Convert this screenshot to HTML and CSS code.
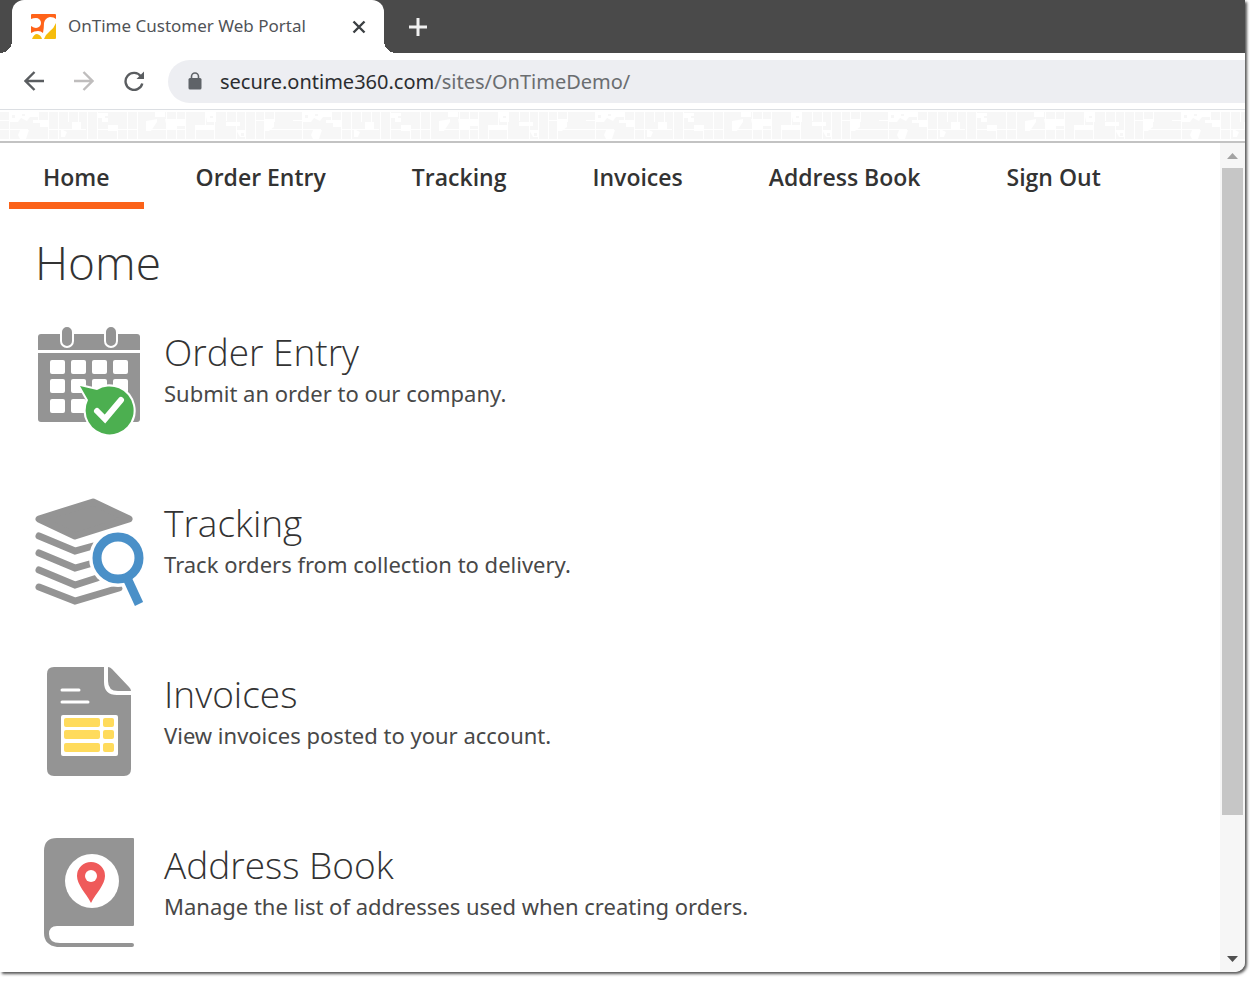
FILE: index.html
```html
<!DOCTYPE html>
<html lang="en">
<head>
    <meta charset="UTF-8">
    <meta name="viewport" content="width=device-width, initial-scale=1.0">
    <title>OnTime Customer Web Portal</title>
    <link rel="stylesheet" href="styles.css">
</head>
<body>
    <div class="window">
        <div class="tab-strip">
            <div class="tab">
                <svg class="favicon" viewBox="0 0 25 25" width="25" height="25">
                    <rect width="25" height="25" rx="1" fill="#ff6319"/>
                    <path d="M0 5Q2 4 5 4A5 5 0 0 1 5 14Q3 14 0 12Z" fill="#fff"/>
                    <path d="M25 5Q23 3 19 3Q14 4 13 9Q13 13 12 19Q10 17 7 17Q3 17 0 19V25H25Z" fill="#fff"/>
                    <path d="M25 9V24Q25 25 24 25H13Q15 20 19 17Q23 14 25 9Z" fill="#f6bc0c"/>
                    <path d="M1 25Q3 20 6 20Q10 21 11 25Z" fill="#f6bc0c"/>
                </svg>
                <span class="tab-title">OnTime Customer Web Portal</span>
                <button class="icon-button" aria-label="Close tab">
                    <svg viewBox="0 0 14 14" width="14" height="14"><path d="M1.500 1.500L12.500 12.500M12.500 1.500L1.500 12.500" fill="none" stroke="#3c4043" stroke-width="2.400"/></svg>
                </button>
            </div>
            <button class="icon-button new-tab" aria-label="New tab">
                <svg viewBox="0 0 18 18" width="18" height="18"><path d="M9 0V18M0 9H18" fill="none" stroke="#f0f0f0" stroke-width="3"/></svg>
            </button>
        </div>

        <div class="toolbar">
            <button class="icon-button" aria-label="Back">
                <svg viewBox="0 0 20 20" width="20" height="20"><path d="M20 10H1.500M10.500 1L1.500 10L10.500 19" fill="none" stroke="#5a5d60" stroke-width="2.400"/></svg>
            </button>
            <button class="icon-button" aria-label="Forward">
                <svg viewBox="0 0 20 20" width="20" height="20"><path d="M0 10H18.500M9.500 1L18.500 10L9.500 19" fill="none" stroke="#bfbdbd" stroke-width="2.400"/></svg>
            </button>
            <button class="icon-button" aria-label="Reload">
                <svg viewBox="0 0 20 20" width="20" height="20"><path d="M17 5.500A8.500 8.500 0 1 0 18.300 12.500" fill="none" stroke="#5a5d60" stroke-width="2.400"/><path d="M20 0.500V8H12.500Z" fill="#5a5d60"/></svg>
            </button>
            <div class="address-bar">
                <svg viewBox="0 0 14 18" width="14" height="18"><rect x="0.500" y="6" width="13" height="11.500" rx="1.500" fill="#5f6368"/><path d="M3.500 7V4.500A3.500 3.500 0 0 1 10.500 4.500V7" fill="none" stroke="#5f6368" stroke-width="1.600"/></svg>
                <span class="url">secure.ontime360.com<span class="path">/sites/OnTimeDemo/</span></span>
            </div>
        </div>

        <div class="banner">
            <svg width="100%" height="27" aria-hidden="true">
                <defs>
                    <pattern id="blocks" width="293" height="27" patternUnits="userSpaceOnUse">
                        <rect width="293" height="27" fill="#f7f7f7"/>
                        <path d="M9.500 0V27M38.500 0V9M48.500 0V27M58.500 0V27M68.500 0V10M78.500 0V10M87.500 0V27M97.500 0V27M117.500 17V27M127.500 0V27M137.500 0V27M166.500 0V27M176.500 0V27M185.500 0V27M195.500 17V27M205.500 0V17M214.500 0V27M226.500 0V9M236.500 0V27M245.500 0V27M255.500 0V27M264.500 0V27M274.500 0V10" fill="none" stroke="#fff"/>
                        <path d="M0 8.500H9M0 17.500H28M48 17.500H86M97 17.500H137M147 17.500H185M195 17.500H214M255 8.500H274M264 17.500H293M166 8.500H185" fill="none" stroke="#fff"/>
                        <path d="M9 0H38V5H30L27 9L21 6L18 10H9ZM20 18H29L26 27H20L18 23ZM33 8H48V15H40V11H33ZM61 17L67 20L65 25H61ZM72 10H81V18H72ZM98 1H108V10H102V6H98ZM108 13H118V19H108ZM146 9L157 7V10L151 19H146ZM155 0H165V5H155ZM165 7H186V14H177V17H167ZM205 0H216V10H207ZM195 13H215V18H195ZM236 18H246V25H240ZM226 10H240V14H226ZM264 7H274V15L269 19H264Z" fill="#fff"/>
                        <path d="M12 3h3v3h-3zM22 2h3v2h-3zM37 12h3v3h-3zM105 4h3v2h-3zM70 12h2v3h-2zM241 21h3v3h-3zM210 4h3v2h-3z" fill="#f7f7f7"/>
                    </pattern>
                </defs>
                <rect width="100%" height="27" fill="url(#blocks)"/>
            </svg>
        </div>

        <div class="viewport">
            <div class="page">
                <nav class="menu">
                    <a class="active" href="#">Home</a>
                    <a href="#order-entry">Order Entry</a>
                    <a href="#tracking">Tracking</a>
                    <a href="#invoices">Invoices</a>
                    <a href="#address-book">Address Book</a>
                    <a href="#sign-out">Sign Out</a>
                </nav>

                <main class="content">
                    <h1>Home</h1>

                    <section class="item" id="order-entry">
                        <svg class="item-icon" viewBox="0 0 110 110" width="110" height="110">
                            <path d="M3 25V12Q3 9 6 9H102Q105 9 105 12V25Z" fill="#949494"/>
                            <path d="M3 28H105V94Q105 97 102 97H6Q3 97 3 94Z" fill="#949494"/>
                            <g fill="#949494" stroke="#fff" stroke-width="2">
                                <rect x="26" y="1" width="12" height="21" rx="6"/>
                                <rect x="70" y="1" width="12" height="21" rx="6"/>
                            </g>
                            <g fill="#fff">
                                <rect x="15" y="35" width="15" height="14" rx="2"/><rect x="36" y="35" width="15" height="14" rx="2"/><rect x="57" y="35" width="15" height="14" rx="2"/><rect x="78" y="35" width="15" height="14" rx="2"/>
                                <rect x="15" y="54" width="15" height="14" rx="2"/><rect x="36" y="54" width="15" height="14" rx="2"/><rect x="57" y="54" width="15" height="14" rx="2"/><rect x="78" y="54" width="15" height="14" rx="2"/>
                                <rect x="15" y="74" width="15" height="14" rx="2"/><rect x="36" y="74" width="15" height="14" rx="2"/>
                            </g>
                            <path d="M45 61L62 65A24 24 0 1 1 53 75Z" fill="#4caf50" stroke="#fff" stroke-width="4" stroke-linejoin="round" paint-order="stroke"/>
                            <path d="M62 86L70 94L86 75" fill="none" stroke="#fff" stroke-width="6" stroke-linecap="round"/>
                        </svg>
                        <div>
                            <h2>Order Entry</h2>
                            <p>Submit an order to our company.</p>
                        </div>
                    </section>

                    <section class="item" id="tracking">
                        <svg class="item-icon" viewBox="0 -2 110 110" width="110" height="110">
                            <path d="M4 21L58 4L94 21L40 38Z" fill="#949494" stroke="#949494" stroke-width="7" stroke-linejoin="round"/>
                            <g fill="none" stroke="#949494" stroke-width="7" stroke-linecap="round">
                                <path d="M4 38L40 53L58 48"/>
                                <path d="M4 55L40 70L58 65"/>
                                <path d="M4 72L40 87L62 80"/>
                                <path d="M4 89L40 103L84 90"/>
                            </g>
                            <circle cx="83" cy="60" r="29" fill="#fff"/>
                            <path d="M90 79L104 107" stroke="#fff" stroke-width="14"/>
                            <circle cx="83" cy="60" r="21" fill="#fff" stroke="#4a90c8" stroke-width="9"/>
                            <path d="M92 80L104 106" stroke="#4a90c8" stroke-width="9"/>
                        </svg>
                        <div>
                            <h2>Tracking</h2>
                            <p>Track orders from collection to delivery.</p>
                        </div>
                    </section>

                    <section class="item" id="invoices">
                        <svg class="item-icon" viewBox="0 1 110 110" width="110" height="110">
                            <path d="M18 1H69V16Q69 29 82 29H96V103Q96 110 89 110H19Q12 110 12 103V8Q12 1 19 1Z" fill="#949494"/>
                            <path d="M73 1Q75 1 77 3L94 21Q96 23 96 25H83Q73 25 73 15Z" fill="#949494"/>
                            <path d="M27 24H44M27 36H53" stroke="#fff" stroke-width="3" stroke-linecap="round"/>
                            <rect x="26" y="49" width="57" height="41" rx="2" fill="#fff"/>
                            <g fill="#ffdb5c">
                                <rect x="29" y="52" width="36" height="9" rx="2"/><rect x="68" y="52" width="11" height="9" rx="2"/>
                                <rect x="29" y="64" width="36" height="9" rx="2"/><rect x="68" y="64" width="11" height="9" rx="2"/>
                                <rect x="29" y="77" width="36" height="9" rx="2"/><rect x="68" y="77" width="11" height="9" rx="2"/>
                            </g>
                        </svg>
                        <div>
                            <h2>Invoices</h2>
                            <p>View invoices posted to your account.</p>
                        </div>
                    </section>

                    <section class="item" id="address-book">
                        <svg class="item-icon" viewBox="0 1 110 110" width="110" height="110">
                            <path d="M22 1H98Q99 1 99 2V88Q99 89 98 89H22Q14 89 14 97Q14 106 25 106H97Q99 106 99 108T97 110H22Q9 108 9 96V14Q9 1 22 1Z" fill="#949494"/>
                            <circle cx="57" cy="44" r="27" fill="#fff"/>
                            <path d="M56 66C51 56 42 48 42 39A14 14 0 0 1 70 39C70 48 61 56 56 66Z" fill="#ef5a5a"/>
                            <circle cx="56" cy="39" r="6" fill="#fff"/>
                        </svg>
                        <div>
                            <h2>Address Book</h2>
                            <p>Manage the list of addresses used when creating orders.</p>
                        </div>
                    </section>
                </main>
            </div>

            <div class="scrollbar">
                <svg viewBox="0 0 11 6" width="11" height="6"><path d="M0 6L5.500 0L11 6Z" fill="#a3a3a3"/></svg>
                <div class="thumb-track"><div class="thumb"></div></div>
                <svg viewBox="0 0 11 6" width="11" height="6"><path d="M0 0L5.500 6L11 0Z" fill="#505050"/></svg>
            </div>
        </div>
    </div>
</body>
</html>
```
FILE: styles.css
```css
* {
    box-sizing: border-box;
}
body {
    margin: 0;
    padding: 0 10px 10px 0;
    height: 100vh;
    background: #fff;
    color: #333;
    font-family: 'Noto Sans', 'Open Sans', sans-serif;
}
.window {
    display: flex;
    flex-direction: column;
    height: 100%;
    overflow: hidden;
    border-bottom-right-radius: 10px;
    background: #fff;
    box-shadow: 2px 2px 3px #555;
}
.icon-button {
    display: flex;
    padding: 0;
    border: none;
    background: none;
    cursor: pointer;
}

/* tab strip */
.tab-strip {
    display: flex;
    height: 53px;
    padding-left: 12px;
    background: #4a4a4a;
}
.tab {
    position: relative;
    display: flex;
    align-items: center;
    width: 372px;
    padding: 0 18px 0 19px;
    border-radius: 12px 12px 0 0;
    background: #fff;
}
.tab::before,
.tab::after {
    content: '';
    position: absolute;
    bottom: 0;
    width: 12px;
    height: 12px;
}
.tab::before {
    right: 100%;
    background: radial-gradient(circle at 0 0, #4a4a4a 12px, #fff 12px);
}
.tab::after {
    left: 100%;
    background: radial-gradient(circle at 100% 0, #4a4a4a 12px, #fff 12px);
}
.tab-title {
    flex: 1;
    margin-left: 12px;
    padding-bottom: 2px;
    color: #505357;
    font-size: 17px;
    white-space: nowrap;
}
.new-tab {
    align-items: center;
    margin-left: 25px;
}

/* toolbar */
.toolbar {
    display: flex;
    align-items: center;
    gap: 30px;
    height: 57px;
    padding-left: 24px;
    border-bottom: 1px solid #dcdfe3;
}
.address-bar {
    display: flex;
    flex: 1;
    align-items: center;
    gap: 18px;
    height: 43px;
    margin-left: -6px;
    padding-left: 20px;
    border-radius: 22px 0 0 22px;
    background: #edeef2;
}
.url {
    color: #2b2d30;
    font-size: 20px;
}
.path {
    color: #6a6d70;
}

.banner {
    height: 33px;
    padding-top: 2px;
    border-bottom: 2px solid #c3c3c3;
}
.banner svg {
    display: block;
}

/* page */
.viewport {
    display: flex;
    flex: 1;
    min-height: 0;
}
.page {
    flex: 1;
    overflow: hidden;
}
.menu {
    display: flex;
    gap: 18px;
    padding-left: 9px;
}
.menu a {
    padding: 22px 34px 12px;
    border-bottom: 7px solid transparent;
    color: #333;
    font-family: 'Open Sans', sans-serif;
    font-size: 23px;
    font-weight: 600;
    line-height: 25px;
    text-decoration: none;
    white-space: nowrap;
}
.menu a.active {
    border-bottom-color: #fb6219;
}
.content {
    padding: 23px 35px 0;
}
h1, h2, p {
    margin: 0;
}
h1, h2 {
    font-family: 'Open Sans', sans-serif;
    font-weight: 300;
}
h1 {
    padding-bottom: 1px;
    font-size: 46px;
    line-height: 60px;
}
.item {
    display: flex;
    gap: 19px;
    height: 171px;
    padding-top: 32px;
}
.item-icon {
    flex: none;
}
h2 {
    font-size: 37px;
    line-height: 54px;
}
p {
    color: #484848;
    font-size: 22px;
    line-height: 28px;
}

/* scrollbar */
.scrollbar {
    display: flex;
    flex-direction: column;
    align-items: center;
    width: 25px;
    padding: 10px 0;
    background: #f6f6f6;
}
.thumb-track {
    flex: 1;
    margin: 9px 0;
}
.thumb {
    width: 21px;
    height: 83%;
    background: #c6c6c6;
}
```
